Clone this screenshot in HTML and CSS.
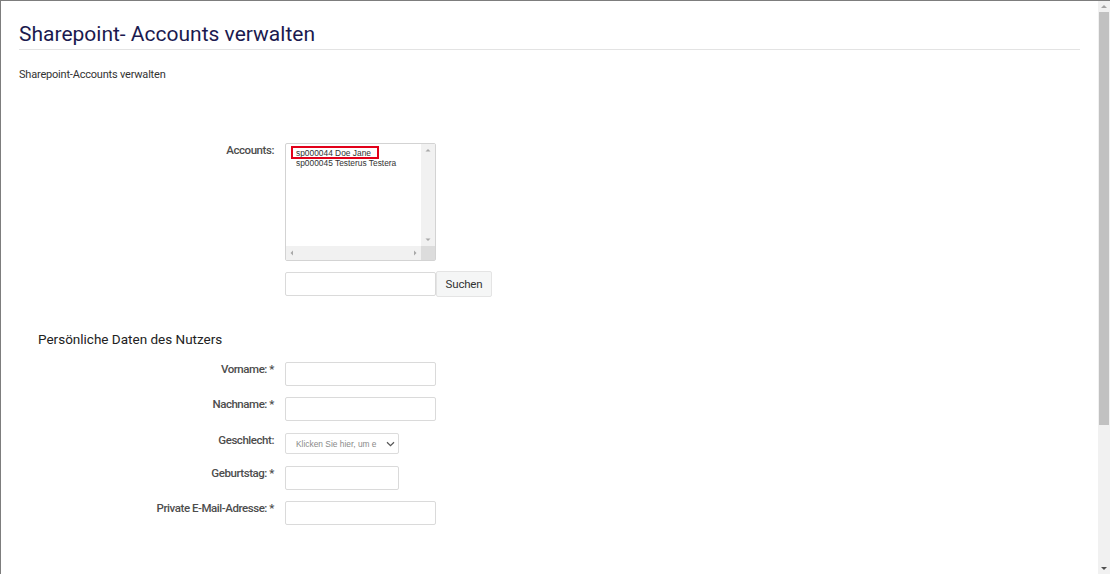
FILE: index.html
```html
<!DOCTYPE html>
<html lang="de">
<head>
<meta charset="utf-8">
<title>Sharepoint- Accounts verwalten</title>
<link rel="stylesheet" href="styles.css">
</head>
<body>
<div class="window">
  <div class="page">
    <h1 class="title">Sharepoint- Accounts verwalten</h1>
    <p class="intro">Sharepoint-Accounts verwalten</p>

    <div class="form form-accounts">
      <label class="lbl">Accounts:</label>
      <div class="listbox">
        <div class="lb-main">
          <div class="lb-options">
            <div class="opt"><span class="marked">sp000044 Doe Jane</span></div>
            <div class="opt">sp000045 Testerus Testera</div>
          </div>
          <div class="lb-vbar">
            <svg class="arr" width="14" height="12" viewBox="0 0 14 12"><path d="M4.5 7.5 L7 5 L9.5 7.5 Z" fill="#a8a8a8"/></svg>
            <div class="lb-space"></div>
            <svg class="arr" width="14" height="12" viewBox="0 0 14 12"><path d="M4.5 4.5 L7 7 L9.5 4.5 Z" fill="#a8a8a8"/></svg>
          </div>
        </div>
        <div class="lb-hbar">
          <svg class="arr" width="12" height="14" viewBox="0 0 12 14"><path d="M7 4.5 L4.5 7 L7 9.5 Z" fill="#a8a8a8"/></svg>
          <div class="lb-space"></div>
          <svg class="arr" width="12" height="14" viewBox="0 0 12 14"><path d="M5 4.5 L7.5 7 L5 9.5 Z" fill="#a8a8a8"/></svg>
          <div class="lb-corner"></div>
        </div>
      </div>
      <span></span>
      <div class="search">
        <input class="field" type="text" aria-label="Suche">
        <button class="btn" type="button">Suchen</button>
      </div>
    </div>

    <h2 class="section">Persönliche Daten des Nutzers</h2>

    <div class="form form-person">
      <label class="lbl">Vorname: *</label>
      <input class="field" type="text">
      <label class="lbl">Nachname: *</label>
      <input class="field" type="text">
      <label class="lbl lbl-select">Geschlecht:</label>
      <div class="select">
        <span class="select-text">Klicken Sie hier, um e</span>
        <svg width="9" height="6" viewBox="0 0 9 6"><path d="M1 1.2 L4.5 4.6 L8 1.2" fill="none" stroke="#555" stroke-width="1.2"/></svg>
      </div>
      <label class="lbl">Geburtstag: *</label>
      <input class="field field-short" type="text">
      <label class="lbl">Private E-Mail-Adresse: *</label>
      <input class="field" type="text">
    </div>
  </div>

  <div class="scrollbar">
    <div class="sb-btn">
      <svg width="12" height="11" viewBox="0 0 12 11"><path d="M3 7 L6 4 L9 7 Z" fill="#a3a3a3"/></svg>
    </div>
    <div class="sb-thumb"></div>
    <div class="sb-track"></div>
    <div class="sb-btn">
      <svg width="12" height="11" viewBox="0 0 12 11"><path d="M3 4 L6 7 L9 4 Z" fill="#505050"/></svg>
    </div>
  </div>
</div>
</body>
</html>
```

FILE: styles.css
```css
* { box-sizing: border-box; }

html, body {
  margin: 0;
  padding: 0;
  overflow: hidden;
  background: #ffffff;
}

body {
  font-family: Roboto, "Liberation Sans", Arial, sans-serif;
  color: #333333;
}

.window {
  width: 1110px;
  height: 574px;
  display: flex;
  border-top: 1px solid #7d7d7d;
  border-left: 1px solid #7d7d7d;
}

.page {
  flex: 1;
  padding: 20px 18px 0 18px;
}

.title {
  margin: 0;
  font-weight: 400;
  font-size: 21px;
  line-height: 26px;
  color: #1b1a4f;
  padding-bottom: 2px;
  border-bottom: 1px solid #e3e3e3;
}

.intro {
  margin: 18px 0 0 0;
  font-size: 11px;
  line-height: 14px;
  letter-spacing: -0.2px;
  color: #333333;
}

.form {
  display: grid;
  grid-template-columns: 255px auto;
  column-gap: 11px;
  justify-content: start;
}

.form-accounts {
  margin-top: 61px;
  row-gap: 10px;
}

.form-person {
  margin-top: 14px;
  row-gap: 11px;
}

.lbl {
  text-align: right;
  font-size: 11.5px;
  line-height: 14px;
  font-weight: 500;
  letter-spacing: -0.45px;
  color: #4d4d4d;
}

.lbl-select { padding-top: 1px; }

/* listbox */
.listbox {
  width: 151px;
  height: 118px;
  border: 1px solid #d3d3d3;
  border-radius: 2px;
  display: flex;
  flex-direction: column;
  background: #fff;
}

.lb-main {
  flex: 1;
  display: flex;
}

.lb-options {
  flex: 1;
  padding: 4px 0 0 10px;
  font-family: "Liberation Sans", Arial, sans-serif;
  font-size: 8.4px;
  line-height: 10px;
  color: #333;
}

.opt { white-space: nowrap; }

.marked {
  position: relative;
  display: inline-block;
}

.marked::after {
  content: "";
  position: absolute;
  left: -5px;
  width: 84px;
  top: -2px;
  bottom: -1px;
  border: 2px solid #e2001a;
}

.lb-vbar {
  width: 14px;
  background: #f1f1f1;
  display: flex;
  flex-direction: column;
}

.lb-space { flex: 1; }

.lb-hbar {
  height: 14px;
  display: flex;
  background: #f1f1f1;
}

.lb-corner {
  width: 14px;
  background: #dcdcdc;
}

.arr { display: block; }

/* search */
.search {
  display: flex;
  align-items: center;
}

.field {
  display: block;
  width: 151px;
  height: 24px;
  margin: 0;
  padding: 0 6px;
  border: 1px solid #dadada;
  border-radius: 2px;
  background: #fff;
  font-family: Roboto, sans-serif;
  font-size: 12px;
}

.field-short { width: 114px; }

.btn {
  width: 56px;
  height: 26px;
  margin: 0;
  padding: 0;
  border: 1px solid #e4e4e4;
  border-radius: 2px;
  background: #f5f6f6;
  font-family: Roboto, sans-serif;
  font-size: 11.5px;
  letter-spacing: -0.2px;
  color: #333;
}

.section {
  margin: 33px 0 0 19px;
  font-size: 13.5px;
  line-height: 18px;
  font-weight: 400;
  color: #222222;
}

/* select */
.select {
  width: 114px;
  height: 21px;
  margin: 1px 0;
  border: 1px solid #dcdcdc;
  border-radius: 2px;
  display: flex;
  align-items: center;
  justify-content: space-between;
  padding: 0 3px 0 10px;
  background: #fff;
}

.select-text {
  font-family: "Liberation Sans", Arial, sans-serif;
  font-size: 8.4px;
  color: #8a8a8a;
  white-space: nowrap;
}

/* page scrollbar */
.scrollbar {
  width: 12px;
  display: flex;
  flex-direction: column;
  background: #f1f1f1;
}

.sb-btn {
  height: 11px;
}

.sb-btn svg { display: block; }

.sb-thumb {
  height: 413px;
  margin: 0 1px;
  background: #c1c1c1;
}

.sb-track { flex: 1; }
```
